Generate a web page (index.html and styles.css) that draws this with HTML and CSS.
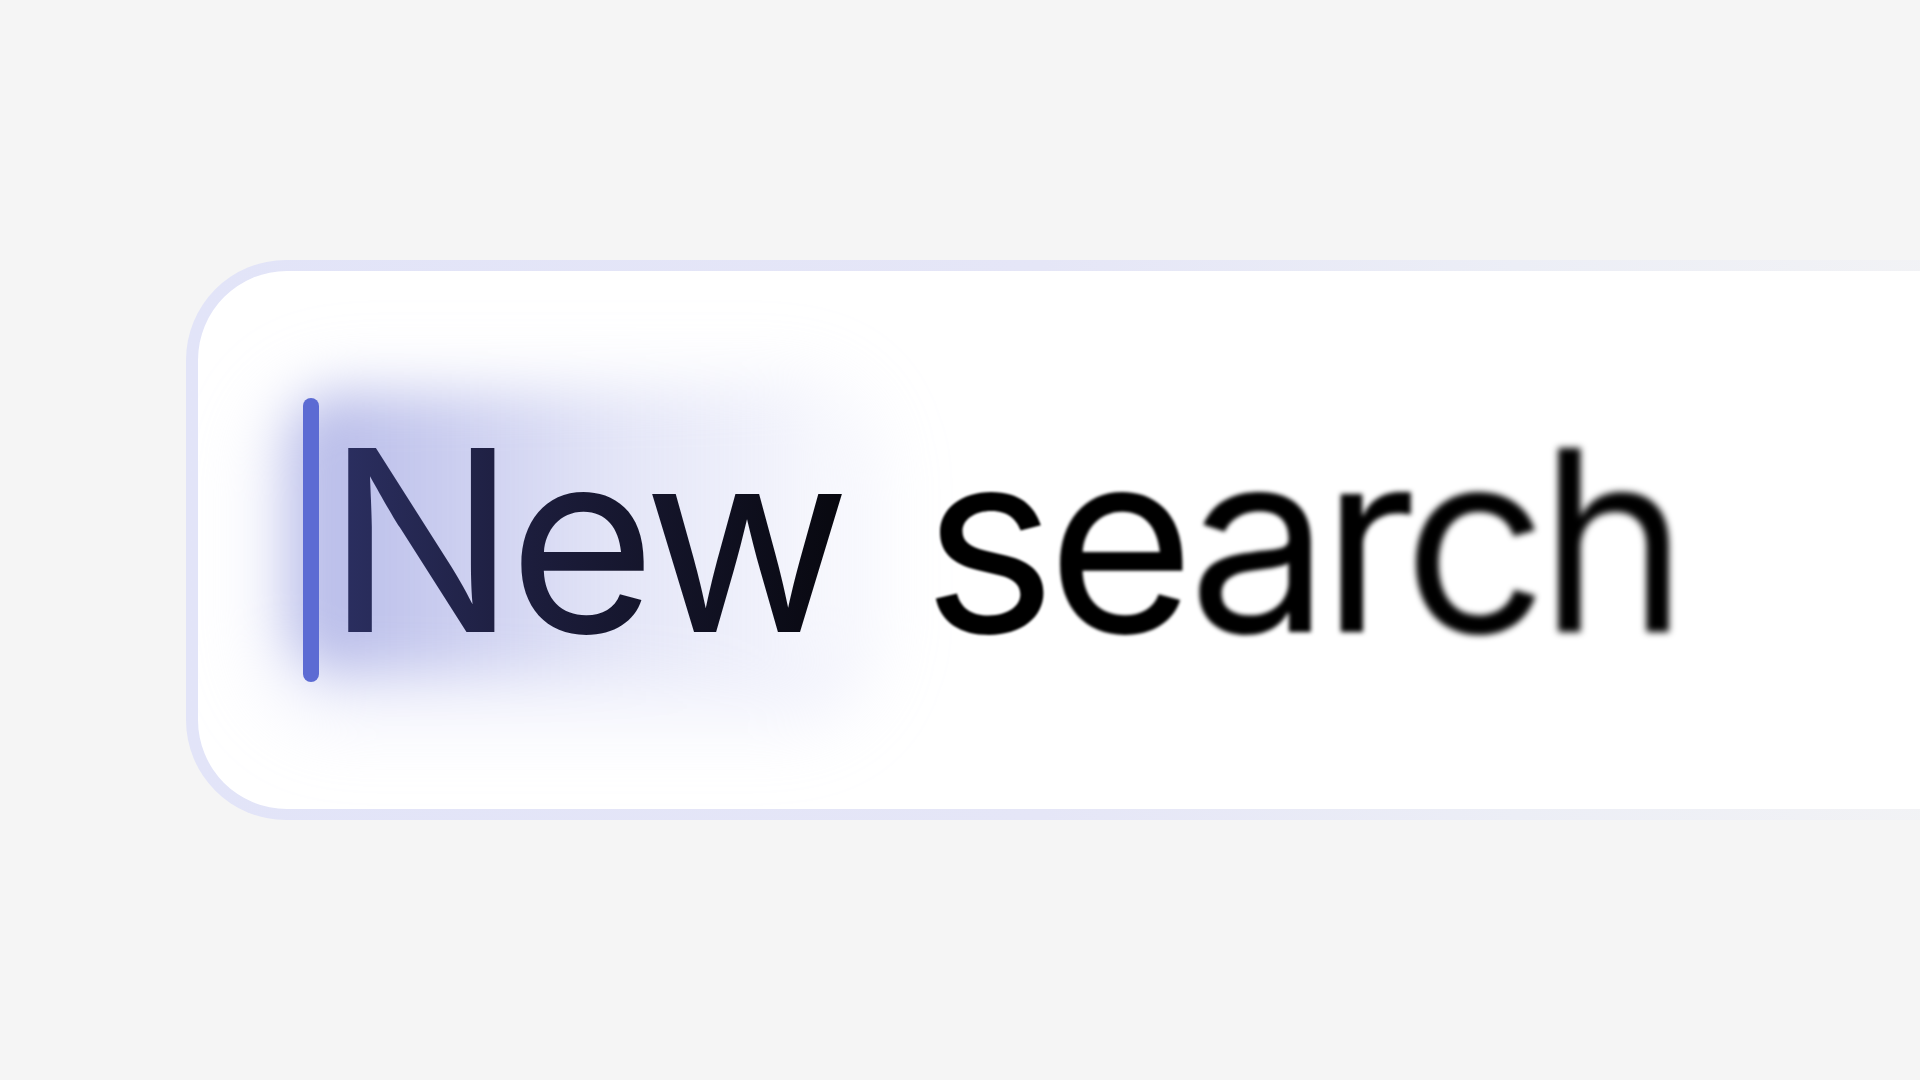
FILE: index.html
```html
<!DOCTYPE html>
<html lang="en">
<head>
<meta charset="utf-8">
<title>New search</title>
<link rel="stylesheet" href="styles.css">
</head>
<body>
<main class="stage">
  <div class="field">
    <div class="field-inner">
      <div class="glow"></div>
      <span class="caret"></span>
      <div class="query">
        <span class="typed">New</span>
        <span class="rest"><span class="b1">s</span><span class="b2">e</span><span class="b3">a</span><span class="b4">r</span><span class="b5">c</span><span class="b6">h</span></span>
      </div>
    </div>
  </div>
</main>
</body>
</html>
```
FILE: styles.css
```css
html, body {
  margin: 0;
  padding: 0;
  background: #f5f5f5;
}

.stage {
  width: 1920px;
  height: 1080px;
  overflow: hidden;
  box-sizing: border-box;
  padding: 260px 0 0 186px;
}

.field {
  width: 1900px;
  height: 560px;
  box-sizing: border-box;
  padding: 11px 0 11px 12px;
  border-radius: 100px 0 0 100px;
  background: linear-gradient(to right, #e2e4f8 0%, #e5e6f7 45%, #eceef6 70%, #f4f4f5 100%);
}

.field-inner {
  position: relative;
  height: 100%;
  border-radius: 89px 0 0 89px;
  background: #ffffff;
  display: flex;
  align-items: center;
  padding-left: 105px;
  overflow: hidden;
}

.glow {
  position: absolute;
  left: 92px;
  top: 122px;
  width: 550px;
  height: 280px;
  border-radius: 50px;
  background: linear-gradient(to right, rgba(150, 156, 222, 0.7) 0%, rgba(165, 170, 228, 0.62) 25%, rgba(195, 199, 238, 0.45) 60%, rgba(215, 218, 245, 0.3) 92%, rgba(230, 232, 250, 0.1) 100%);
  box-shadow: 0 20px 50px 30px rgba(215, 218, 245, 0.35);
  filter: blur(26px);
}

.caret {
  position: relative;
  flex: none;
  width: 16px;
  height: 284px;
  border-radius: 8px;
  background: #5c6bd3;
}

.query {
  position: relative;
  display: flex;
  align-items: center;
  font-family: "Inter", "Liberation Sans", sans-serif;
  font-size: 253px;
  line-height: 1;
  font-weight: 400;
  letter-spacing: -8px;
  white-space: nowrap;
  margin-left: 7px;
}

.typed {
  background: linear-gradient(to right, #2c3063 0%, #1c1d3c 40%, #08080f 100%);
  -webkit-background-clip: text;
  background-clip: text;
  color: transparent;
}

.rest {
  margin-left: 80px;
  letter-spacing: -9px;
  color: #000000;
}

.b1 { filter: blur(0.8px); }
.b2 { filter: blur(1.4px); }
.b3 { filter: blur(2px); }
.b4 { filter: blur(2.6px); }
.b5 { filter: blur(3.2px); }
.b6 { filter: blur(3.6px); }
```
